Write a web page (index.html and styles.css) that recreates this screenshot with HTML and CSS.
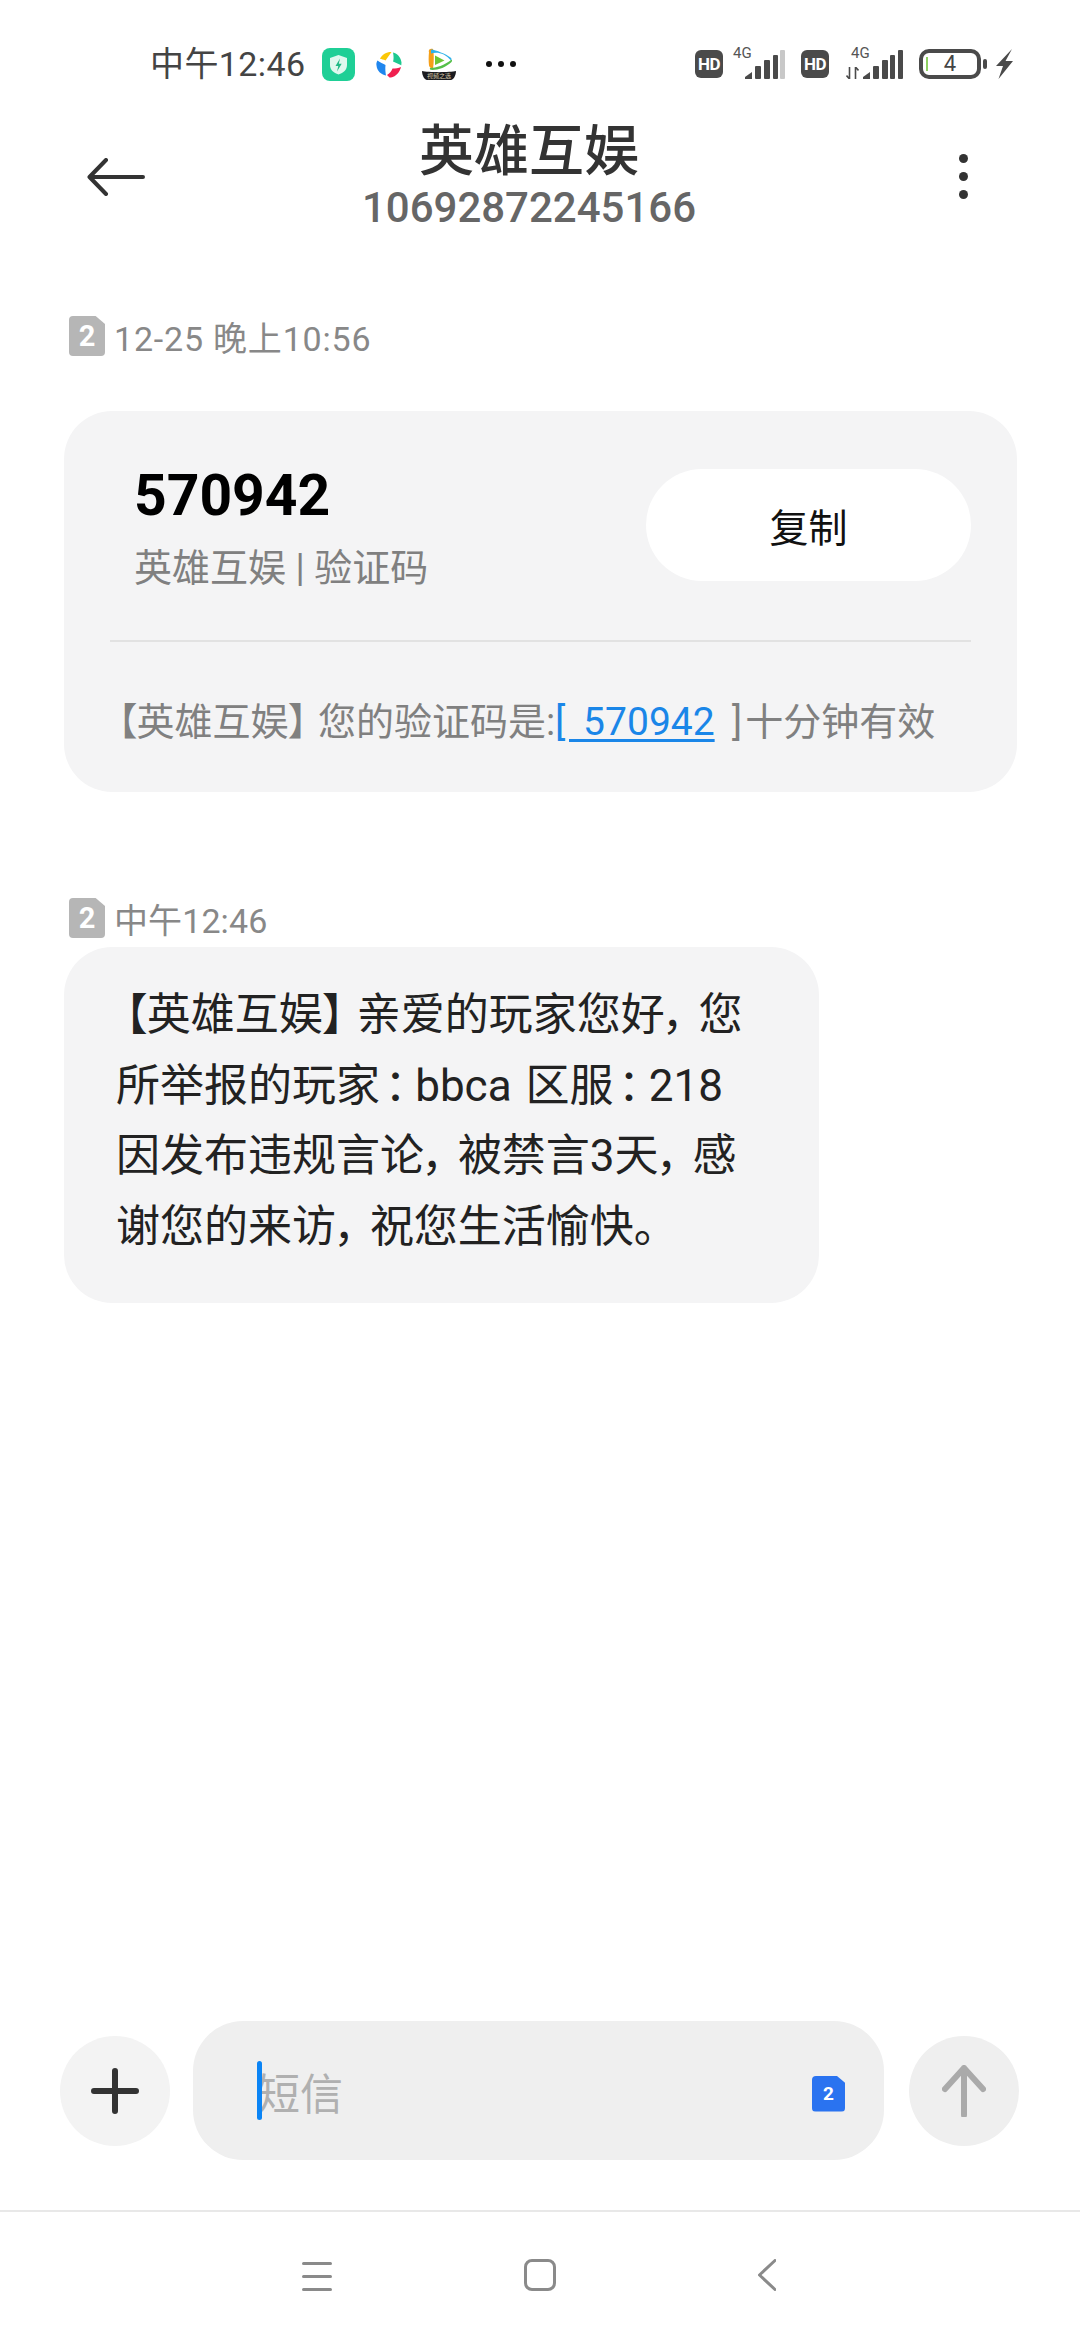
FILE: index.html
```html
<!DOCTYPE html>
<html lang="zh-CN">
<head>
  <meta charset="UTF-8">
  <meta name="viewport" content="width=device-width, initial-scale=1.0">
  <title>英雄互娱</title>
  <link rel="stylesheet" href="styles.css">
</head>
<body>
  <div class="screen">

    <!-- status bar -->
    <div class="status">
      <div class="status-left">
        <span class="clock">中午12:46</span>
        <svg class="app app-shield" viewBox="0 0 33 33">
          <rect width="33" height="33" rx="8" fill="#1fcf96"/>
          <path d="M16.5 7l8.5 3v7c0 4.800-3.500 7.800-8.500 9.500C11.500 24.800 8 21.800 8 17v-7z" fill="#dff8ee"/>
          <path d="M18 10.500l-4.500 7.500h2.800l-1.300 5.500 4.700-7.800h-2.900z" fill="#1fb985"/>
        </svg>
        <svg class="app app-pin" viewBox="0 0 26 27">
          <path d="M4 8C6 3 11 .8 15.500 1L9.500 9.500C7.500 8.500 5.500 8 4 8z" fill="#fbc707"/>
          <path d="M17 1.500c4.500 1 8 5 8.500 10l-.2 2.800L17 10.500c.8-1.800.8-5 0-9z" fill="#1dc98f"/>
          <path d="M25 16c-1 5-5 9.500-10 10.500h-1.500L11 24c2.500-1.500 4.500-3.500 5.500-6.500 3 0 6-.5 8.500-1.500z" fill="#f0204f"/>
          <path d="M10 24.500C5 23.500 1 20 .5 14.500 0 12.500.8 10.500 1.500 9.500c2 1.500 6 3.500 8 4.500-.5 4 0 7.500.5 10.500z" fill="#1f86ee"/>
        </svg>
        <svg class="app app-video" viewBox="0 0 34 32">
          <path d="M9 2.500 22 1.500c5 3 9 7 10 9.500-1 3.500-6 9-13 11l-10 0c-2-4-3-14 0-19.500z" fill="#ffffff"/>
          <path d="M7 4.500C6 1 9 .5 11 1c1 4 1 14 0 19-2 .5-3.500-.5-4-2.500-.5-4-.5-9 0-13.500z" fill="#f59f18"/>
          <path d="M9 1.500C14 2 24 6 28.500 9.500c1.500 1 1 2.500.5 3C23 5 15 3.500 9 5.500z" fill="#2fb2ea"/>
          <path d="M8 20c6 0 15-3 21-8 1-1 1.500 1 .5 2-5 5-13 8-19 8-2.500 0-3-1-2.500-2z" fill="#55bf4a"/>
          <path d="M13 7.500 22.500 12.500 13 17z" fill="#6cc635"/>
          <path d="M0 23c6 1.500 28 1.500 34 0 0 5-3 9-5 9H5c-2 0-5-4-5-9z" fill="#1b1b1f"/>
          <text x="17" y="30" class="app-video-text">视频之选</text>
        </svg>
        <span class="more-dots"><i></i><i></i><i></i></span>
      </div>
      <div class="status-right">
        <span class="hd">HD</span>
        <div class="net">
          <span class="net-label">4G</span>
          <svg class="bars" viewBox="0 0 40 29">
            <path d="M0 29v-2l7-5v7z" fill="#4a4a4a"/>
            <rect x="10" y="16" width="6" height="13" rx="1" fill="#4a4a4a"/>
            <rect x="19" y="10" width="6" height="19" rx="1" fill="#4a4a4a"/>
            <rect x="28" y="5" width="5" height="24" rx="1" fill="#4a4a4a"/>
            <rect x="35" y="0" width="5" height="29" rx="1" fill="#c8c8c8"/>
          </svg>
        </div>
        <span class="hd hd-second">HD</span>
        <div class="net net-second">
          <span class="net-label">4G</span>
          <svg class="arrows" viewBox="0 0 13 12">
            <path d="M3.500 0v12M.5 8.500l3 3.500 0-3.500M9.500 12V0m0 0 3 3.500" fill="none" stroke="#4a4a4a" stroke-width="1.600"/>
          </svg>
          <svg class="bars" viewBox="0 0 40 29">
            <path d="M0 29v-2l7-5v7z" fill="#4a4a4a"/>
            <rect x="10" y="16" width="6" height="13" rx="1" fill="#4a4a4a"/>
            <rect x="19" y="10" width="6" height="19" rx="1" fill="#4a4a4a"/>
            <rect x="27" y="5" width="5" height="24" rx="1" fill="#4a4a4a"/>
            <rect x="35" y="0" width="5" height="29" rx="1" fill="#4a4a4a"/>
          </svg>
        </div>
        <div class="battery">
          <i class="battery-level"></i>
          <span class="battery-num">4</span>
        </div>
        <i class="battery-nub"></i>
        <svg class="bolt" viewBox="0 0 18 30">
          <path d="M17 0 1 17h7L3.500 30 18 12h-7.500z" fill="#4a4a4a"/>
        </svg>
      </div>
    </div>

    <!-- title bar -->
    <div class="header">
      <svg class="back" viewBox="0 0 58 38">
        <path d="M56 19H3M19 2 2.500 19 19 36" fill="none" stroke="#333" stroke-width="4" stroke-linecap="round" stroke-linejoin="round"/>
      </svg>
      <div class="header-title">
        <div class="name">英雄互娱</div>
        <div class="number">10692872245166</div>
      </div>
      <div class="kebab"><i></i><i></i><i></i></div>
    </div>

    <!-- messages -->
    <div class="thread">
      <div class="msg-time msg-time-first">
        <span class="sim">2</span>
        <span>12-25 晚上10:56</span>
      </div>
      <div class="card">
        <div class="code-row">
          <div class="code-info">
            <div class="code">570942</div>
            <div class="code-from">英雄互娱 | 验证码</div>
          </div>
          <button class="copy-btn">复制</button>
        </div>
        <div class="card-text"><span class="br-open">【</span>英雄互娱<span class="br-close">】</span>您的验证码是:<a class="code-link">[ 570942</a> <span class="br-end">]</span>十分钟有效</div>
      </div>

      <div class="msg-time msg-time-second">
        <span class="sim">2</span>
        <span>中午12:46</span>
      </div>
      <div class="bubble">
        <div><span class="br-open">【</span>英雄互娱<span class="br-close">】</span>亲爱的玩家您好<span class="punct">，</span>您</div>
        <div>所举报的玩家<span class="colon">：</span>bbca 区服<span class="colon">：</span>218</div>
        <div>因发布违规言论<span class="punct">，</span>被禁言3天<span class="punct">，</span>感</div>
        <div>谢您的来访<span class="punct">，</span>祝您生活愉快。</div>
      </div>
    </div>

    <!-- composer -->
    <div class="composer">
      <div class="round-btn">
        <svg class="plus" viewBox="0 0 48 46">
          <path d="M24 3v40M3 23h42" fill="none" stroke="#333" stroke-width="6" stroke-linecap="round"/>
        </svg>
      </div>
      <div class="field">
        <i class="caret"></i>
        <span class="placeholder">短信</span>
        <span class="sim sim-blue">2</span>
      </div>
      <div class="round-btn round-btn-send">
        <svg class="send" viewBox="0 0 44 52">
          <path d="M22 3v47M3 24 22 3l19 21" fill="none" stroke="#aaa" stroke-width="6" stroke-linecap="round" stroke-linejoin="round"/>
        </svg>
      </div>
    </div>

    <!-- nav bar -->
    <div class="nav">
      <div class="nav-menu"><i></i><i></i><i></i></div>
      <div class="nav-home"></div>
      <svg class="nav-back" viewBox="0 0 18 32">
        <path d="M17 1.500 1.500 16 17 30.500" fill="none" stroke="#8a8a8a" stroke-width="3" stroke-linecap="round" stroke-linejoin="round"/>
      </svg>
    </div>

  </div>
</body>
</html>
```

FILE: styles.css
```css
* {
  box-sizing: border-box;
}

body {
  margin: 0;
  background: #fff;
  font-family: "Roboto", "Noto Sans CJK SC", sans-serif;
}

.screen {
  width: 1080px;
  height: 2340px;
  display: flex;
  flex-direction: column;
  overflow: hidden;
  background: #fff;
}

/* status bar */
.status {
  height: 126px;
  padding: 45px 67px 0 150px;
  display: flex;
  justify-content: space-between;
  align-items: flex-start;
  color: #444;
}
.status-left {
  display: flex;
  align-items: center;
  height: 38px;
}
.clock {
  font-size: 34px;
  line-height: 38px;
  letter-spacing: 0.4px;
  width: 172px;
  white-space: nowrap;
}
.app-shield {
  width: 33px;
  height: 33px;
}
.app-pin {
  width: 26px;
  height: 27px;
  margin-left: 21px;
}
.app-video {
  width: 34px;
  height: 32px;
  margin-left: 20px;
}
.app-video-text {
  font-size: 6px;
  fill: #d8c9a8;
  text-anchor: middle;
}
.more-dots {
  display: flex;
  gap: 6px;
  margin-left: 30px;
}
.more-dots i {
  width: 6px;
  height: 6px;
  border-radius: 50%;
  background: #111;
}

.status-right {
  display: flex;
  align-items: center;
  height: 38px;
}
.hd {
  width: 28px;
  height: 28px;
  border-radius: 6px;
  background: #4a4a4a;
  color: #fff;
  font-size: 17px;
  font-weight: 700;
  line-height: 28px;
  letter-spacing: -0.5px;
  text-align: center;
}
.hd-second {
  margin-left: 16px;
}
.net {
  position: relative;
  width: 52px;
  height: 30px;
  margin-left: 10px;
  display: flex;
  align-items: flex-end;
  justify-content: flex-end;
}
.net .bars {
  width: 40px;
  height: 29px;
}
.net-label {
  position: absolute;
  left: 0;
  top: -4px;
  font-size: 15px;
  line-height: 16px;
  color: #555;
}
.net-second {
  width: 57px;
  margin-left: 17px;
}
.net-second .net-label {
  left: 5px;
}
.arrows {
  width: 13px;
  height: 12px;
  margin-right: 4px;
}
.battery {
  width: 62px;
  height: 30px;
  margin-left: 16px;
  border: 4px solid #4a4a4a;
  border-radius: 10px;
  display: flex;
  align-items: center;
  justify-content: center;
  position: relative;
}
.battery-level {
  position: absolute;
  left: 3px;
  top: 4px;
  width: 2px;
  height: 14px;
  background: #8fd163;
}
.battery-num {
  font-size: 22px;
  line-height: 22px;
  color: #444;
}
.battery-nub {
  width: 4px;
  height: 10px;
  margin-left: 2px;
  border-radius: 2px;
  background: #4a4a4a;
}
.bolt {
  width: 18px;
  height: 30px;
  margin-left: 8px;
}

/* header */
.header {
  height: 101px;
  padding: 0 112px 0 87px;
  display: flex;
  align-items: center;
}
.back {
  width: 58px;
  height: 38px;
}
.header-title {
  flex: 1;
  text-align: center;
  padding-right: 46px;
}
.name {
  font-size: 55px;
  font-weight: 500;
  line-height: 58px;
  color: #333;
  white-space: nowrap;
}
.number {
  margin-top: 5px;
  font-size: 42px;
  font-weight: 500;
  line-height: 46px;
  color: #666;
}
.kebab {
  display: flex;
  flex-direction: column;
  gap: 9px;
}
.kebab i {
  width: 9px;
  height: 9px;
  border-radius: 50%;
  background: #333;
}

/* thread */
.thread {
  flex: 1;
  padding: 0 63px 0 64px;
}
.msg-time {
  display: flex;
  align-items: center;
  height: 40px;
  padding-left: 5px;
  font-size: 34px;
  color: #888;
  white-space: nowrap;
}
.msg-time-first {
  margin-top: 89px;
  letter-spacing: 0.8px;
}
.msg-time-second {
  margin-top: 106px;
  letter-spacing: 0.1px;
}
.sim {
  width: 36px;
  height: 40px;
  margin-right: 9px;
  border-radius: 4px;
  background: #b6b6b6;
  color: #fff;
  font-size: 29px;
  font-weight: 700;
  line-height: 40px;
  letter-spacing: 0;
  text-align: center;
  clip-path: polygon(0 0, 74% 0, 100% 20%, 100% 100%, 0 100%);
}

.card {
  margin-top: 55px;
  height: 381px;
  padding: 0 46px;
  border-radius: 48px;
  background: #f4f4f5;
}
.code-row {
  height: 231px;
  padding: 4px 0 0 24px;
  display: flex;
  justify-content: space-between;
  align-items: center;
  border-bottom: 2px solid #e2e2e2;
}
.code {
  font-size: 57px;
  font-weight: 700;
  line-height: 68px;
  color: #000;
}
.code-from {
  margin-top: 12px;
  font-size: 38px;
  line-height: 52px;
  color: #808080;
  white-space: nowrap;
}
.copy-btn {
  width: 325px;
  height: 112px;
  margin-top: -5px;
  border: none;
  border-radius: 56px;
  background: #fff;
  color: #111;
  font-family: inherit;
  font-size: 39px;
}
.card-text {
  padding-top: 52px;
  font-size: 38px;
  line-height: 56px;
  word-spacing: 8px;
  color: #808080;
  white-space: nowrap;
}
.code-link {
  color: #1a86e8;
  font-size: 39px;
  text-decoration: underline;
  text-underline-offset: 4px;
}

/* the phone font sets these marks narrower than a full CJK cell */
.br-open,
.br-close,
.punct,
.colon {
  font-feature-settings: "palt";
}
.br-open {
  margin-left: 0.2em;
}
.br-close {
  margin-right: 0.27em;
}
.br-end {
  margin-right: 3px;
}
.punct {
  margin-right: 0.27em;
}
.colon {
  margin: 0 0.2em 0 0.1em;
}

.bubble {
  width: 755px;
  height: 356px;
  margin-top: 9px;
  padding: 33px 0 0 52px;
  border-radius: 48px;
  background: #f4f4f5;
  font-size: 44px;
  line-height: 70.500px;
  word-spacing: 3px;
  color: #222;
  white-space: nowrap;
}

/* composer */
.composer {
  height: 139px;
  margin-bottom: 50px;
  padding: 0 0 0 60px;
  display: flex;
  align-items: center;
}
.round-btn {
  width: 110px;
  height: 110px;
  border-radius: 50%;
  background: #f3f3f3;
  display: flex;
  align-items: center;
  justify-content: center;
}
.round-btn-send {
  margin-left: 25px;
  background: #efefef;
}
.plus {
  width: 48px;
  height: 46px;
}
.send {
  width: 44px;
  height: 52px;
}
.field {
  width: 691px;
  height: 139px;
  margin-left: 23px;
  padding: 0 39px 0 64px;
  border-radius: 50px;
  background: #efefef;
  display: flex;
  align-items: center;
  position: relative;
}
.caret {
  position: absolute;
  left: 64px;
  top: 40px;
  width: 5px;
  height: 59px;
  border-radius: 3px;
  background: #0a84f5;
}
.placeholder {
  flex: 1;
  font-size: 43px;
  color: #b0b0b0;
}
.sim-blue {
  width: 33px;
  height: 36px;
  margin: 6px 0 0;
  background: #2a73f0;
  font-size: 19px;
  line-height: 36px;
}

/* nav bar */
.nav {
  height: 130px;
  padding: 47px 304px 0 302px;
  border-top: 2px solid #e8e8e8;
  display: flex;
  justify-content: space-between;
  align-items: flex-start;
}
.nav-menu {
  width: 30px;
  display: flex;
  flex-direction: column;
  gap: 10px;
  padding-top: 3px;
}
.nav-menu i {
  height: 3px;
  border-radius: 2px;
  background: #8a8a8a;
}
.nav-home {
  width: 32px;
  height: 32px;
  margin-right: 10px;
  border: 3px solid #8a8a8a;
  border-radius: 8px;
}
.nav-back {
  width: 18px;
  height: 32px;
}
```
